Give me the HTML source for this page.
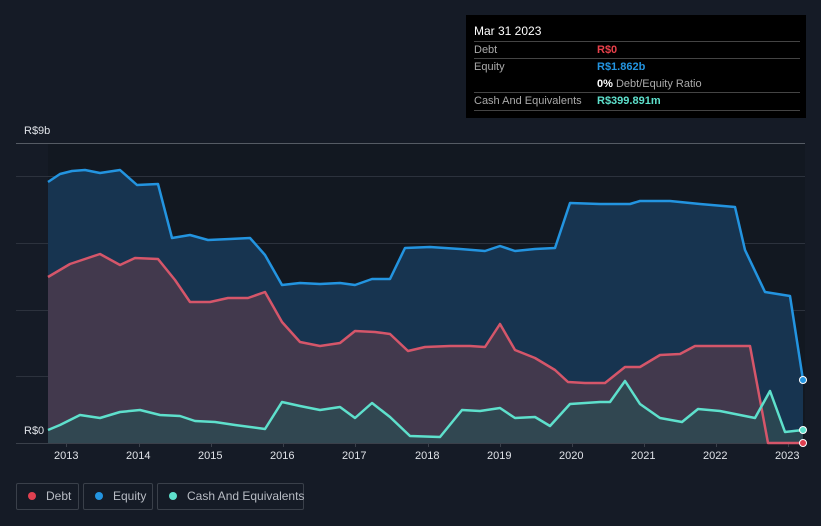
<!DOCTYPE html>
<html><head><meta charset="utf-8"><style>
html,body{margin:0;padding:0}
body{background:#151b26;font-family:"Liberation Sans",sans-serif;width:821px;height:526px;overflow:hidden;position:relative}
.tt{position:absolute;left:466px;top:15px;width:340px;height:103px;background:#000;color:#fff;font-size:11px}
.tt .r{position:absolute;left:8px;width:326px;border-top:1px solid #444;height:17px;line-height:17px}
.lg{position:absolute;top:483px;height:27px;border:1px solid #3a404a;border-radius:2px;color:#b8bcc4;font-size:12px;line-height:25px;box-sizing:border-box;white-space:nowrap}
.lg i{display:inline-block;width:8px;height:8px;border-radius:50%;margin:0 10px 0 11px}
.ax{position:absolute;top:450px;color:#e0e3e8;font-size:11px}
</style></head><body>
<svg width="821" height="526" style="position:absolute;left:0;top:0">
<rect x="48" y="143" width="757" height="300" fill="#121821"/>
<g stroke="#2c323d" stroke-width="1">
<line x1="16" y1="143.5" x2="805" y2="143.5" stroke="#555b64"/>
<line x1="16" y1="176.5" x2="805" y2="176.5"/>
<line x1="16" y1="243.5" x2="805" y2="243.5"/>
<line x1="16" y1="310.5" x2="805" y2="310.5"/>
<line x1="16" y1="376.5" x2="805" y2="376.5"/>
<line x1="16" y1="443.5" x2="805" y2="443.5" stroke="#3a404a"/>
</g>
<g stroke="#3a404a"><line x1="66.5" y1="443" x2="66.5" y2="447"/><line x1="139.5" y1="443" x2="139.5" y2="447"/><line x1="211.5" y1="443" x2="211.5" y2="447"/><line x1="283.5" y1="443" x2="283.5" y2="447"/><line x1="355.5" y1="443" x2="355.5" y2="447"/><line x1="428.5" y1="443" x2="428.5" y2="447"/><line x1="500.5" y1="443" x2="500.5" y2="447"/><line x1="572.5" y1="443" x2="572.5" y2="447"/><line x1="644.5" y1="443" x2="644.5" y2="447"/><line x1="716.5" y1="443" x2="716.5" y2="447"/><line x1="788.5" y1="443" x2="788.5" y2="447"/></g>
<polygon fill="#173450" points="48,182 60,174 72,171 85,170 100,173 120,170 137,185 158,184 172,238 190,235 208,240 230,239 250,238 265,255 282,285 300,283 320,284 340,283 355,285 372,279 390,279 405,248 430,247 460,249 485,251 500,246 515,251 535,249 555,248 570,203 600,204 630,204 640,201 670,201 700,204 735,207 745,250 765,292 790,296 803,380 803,443 48,443"/>
<polygon fill="#42394d" points="48,277 70,264 100,254 120,265 135,258 158,259 175,280 190,302 210,302 228,298 248,298 265,292 282,322 300,342 320,346 340,343 355,331 375,332 390,334 408,351 425,347 450,346 470,346 485,347 500,324 515,350 535,358 555,370 568,382 585,383 605,383 625,367 640,367 660,355 680,354 695,346 720,346 750,346 768,443 48,443"/>
<polygon fill="#2e4a52" fill-opacity="0.85" points="48,430 60,425 80,415 100,418 120,412 140,410 160,415 180,416 195,421 215,422 235,425 265,429 282,402 300,406 320,410 340,407 355,418 372,403 390,417 410,436 440,437 462,410 480,411 500,408 515,418 535,417 550,426 570,404 600,402 610,402 625,381 640,404 660,418 682,422 698,409 720,411 755,418 770,391 785,432 803,430 803,443 48,443"/>
<polyline fill="none" stroke="#2394e0" stroke-width="2.5" stroke-linejoin="round" points="48,182 60,174 72,171 85,170 100,173 120,170 137,185 158,184 172,238 190,235 208,240 230,239 250,238 265,255 282,285 300,283 320,284 340,283 355,285 372,279 390,279 405,248 430,247 460,249 485,251 500,246 515,251 535,249 555,248 570,203 600,204 630,204 640,201 670,201 700,204 735,207 745,250 765,292 790,296 803,380"/>
<polyline fill="none" stroke="#d5566a" stroke-width="2.5" stroke-linejoin="round" points="48,277 70,264 100,254 120,265 135,258 158,259 175,280 190,302 210,302 228,298 248,298 265,292 282,322 300,342 320,346 340,343 355,331 375,332 390,334 408,351 425,347 450,346 470,346 485,347 500,324 515,350 535,358 555,370 568,382 585,383 605,383 625,367 640,367 660,355 680,354 695,346 720,346 750,346 768,443 803,443"/>
<polyline fill="none" stroke="#5ee0cc" stroke-width="2.5" stroke-linejoin="round" points="48,430 60,425 80,415 100,418 120,412 140,410 160,415 180,416 195,421 215,422 235,425 265,429 282,402 300,406 320,410 340,407 355,418 372,403 390,417 410,436 440,437 462,410 480,411 500,408 515,418 535,417 550,426 570,404 600,402 610,402 625,381 640,404 660,418 682,422 698,409 720,411 755,418 770,391 785,432 803,430"/>
<circle cx="803" cy="380" r="3.5" fill="#2394e0" stroke="#fff" stroke-width="1"/>
<circle cx="803" cy="430" r="3.5" fill="#5ee0cc" stroke="#fff" stroke-width="1"/>
<circle cx="803" cy="443" r="3.5" fill="#e04050" stroke="#fff" stroke-width="1"/>
</svg>
<div style="position:absolute;left:24px;top:125px;color:#e0e3e8;font-size:11px">R$9b</div>
<div style="position:absolute;left:24px;top:425px;color:#e0e3e8;font-size:11px">R$0</div>
<div class="ax" style="left:54px">2013</div><div class="ax" style="left:126px">2014</div><div class="ax" style="left:198px">2015</div><div class="ax" style="left:270px">2016</div><div class="ax" style="left:342px">2017</div><div class="ax" style="left:415px">2018</div><div class="ax" style="left:487px">2019</div><div class="ax" style="left:559px">2020</div><div class="ax" style="left:631px">2021</div><div class="ax" style="left:703px">2022</div><div class="ax" style="left:775px">2023</div>
<div class="tt">
<div style="position:absolute;left:8px;top:9px;font-size:12px">Mar 31 2023</div>
<div class="r" style="top:26px;color:#aaa">Debt<span style="position:absolute;left:123px;color:#e8404a;font-weight:bold">R$0</span></div>
<div class="r" style="top:43px;color:#aaa">Equity<span style="position:absolute;left:123px;color:#2394e0;font-weight:bold">R$1.862b</span></div>
<div style="position:absolute;left:131px;top:61px;color:#aaa;line-height:17px"><b style="color:#fff">0%</b> Debt/Equity Ratio</div>
<div class="r" style="top:77px;color:#aaa">Cash And Equivalents<span style="position:absolute;left:123px;color:#5ee0cc;font-weight:bold">R$399.891m</span></div>
<div class="r" style="top:95px;height:0"></div>
</div>
<div class="lg" style="left:16px;width:63px"><i style="background:#e04050"></i>Debt</div>
<div class="lg" style="left:83px;width:70px"><i style="background:#2394e0"></i>Equity</div>
<div class="lg" style="left:157px;width:147px"><i style="background:#5ee0cc"></i>Cash And Equivalents</div>
</body></html>
